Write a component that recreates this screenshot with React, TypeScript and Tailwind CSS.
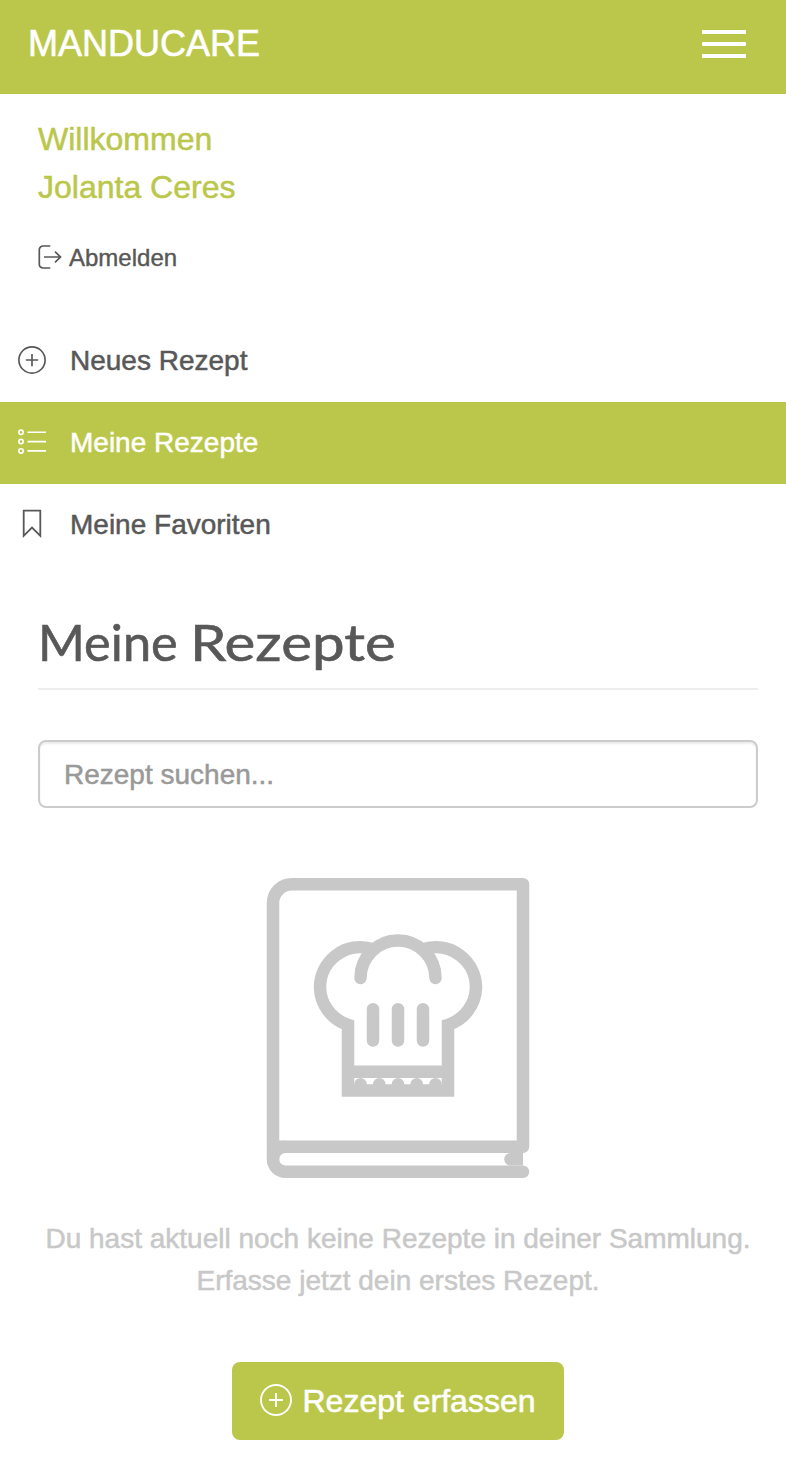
import type { ReactNode } from "react";

function PlusCircle({ className }: { className: string }) {
  return (
    <svg viewBox="0 0 32 32" fill="none" stroke="currentColor" strokeWidth="1.9" className={className}>
      <circle cx="16" cy="16" r="15" />
      <path d="M16 9v14M9 16h14" />
    </svg>
  );
}

function ListIcon() {
  return (
    <svg viewBox="0 0 28 28" fill="none" stroke="currentColor" strokeWidth="1.6" className="h-7 w-7">
      <circle cx="3" cy="4.3" r="2.2" />
      <circle cx="3" cy="13.6" r="2.2" />
      <circle cx="3" cy="22.9" r="2.2" />
      <path d="M9.5 4.3H28M9.5 13.6H28M9.5 22.9H28" />
    </svg>
  );
}

function BookmarkIcon() {
  return (
    <svg viewBox="0 0 28 28" fill="none" stroke="currentColor" strokeWidth="1.8" className="h-7 w-7 overflow-visible">
      <path d="M5.7 .6H22.3V25.8L14 17.6L5.7 25.8Z" />
    </svg>
  );
}

function LogoutIcon() {
  return (
    <svg viewBox="0 0 24 24" fill="none" stroke="currentColor" strokeWidth="1.7" className="h-6 w-6">
      <path d="M12.3 1H4.9A3.6 3.6 0 0 0 1.3 4.6V19.4A3.6 3.6 0 0 0 4.9 23H12.3" />
      <path d="M6 12H22.5M17 6.7L22.5 12L17 17.3" />
    </svg>
  );
}

function CookbookIcon() {
  return (
    <svg viewBox="0 0 24 24" fill="none" stroke="currentColor" strokeWidth="1" className="h-[300px] w-[300px] text-[#c8c8c8]">
      <path strokeLinecap="round" strokeLinejoin="round" d="M2 21.5H22V.5H3.5A1.5 1.5 0 0 0 2 2V22.5A1 1 0 0 0 3 23.5H22" />
      <path fill="currentColor" stroke="none" d="M22 22H21A.5.5 0 0 0 21 23H22Z" />
      <path strokeLinecap="round" d="M9 8A3 3 0 0 1 15 8M10 10.5V13M12 10.5V13M14 10.5V13" />
      <path d="M9.85 5.66A3.22 3.22 0 0 0 5.76 8.75A3.22 3.22 0 0 0 8 11.75V17H16V11.75A3.22 3.22 0 0 0 18.24 8.75A3.22 3.22 0 0 0 14.15 5.66M8 15.5H16" />
      <g fill="currentColor" stroke="none">
        <circle cx="9" cy="16.5" r=".5" />
        <circle cx="10.5" cy="16.5" r=".5" />
        <circle cx="12" cy="16.5" r=".5" />
        <circle cx="13.5" cy="16.5" r=".5" />
        <circle cx="15" cy="16.5" r=".5" />
      </g>
      <path d="M2 22.5A1 1 0 0 1 3 21.5" />
    </svg>
  );
}

function MenuItem({ icon, label, active }: { icon: ReactNode; label: string; active?: boolean }) {
  return (
    <a
      className={
        active
          ? "flex h-[82px] items-center gap-6 bg-[#bbc74a] px-[18px] text-white"
          : "flex h-[82px] items-center gap-6 px-[18px] text-[#585858]"
      }
    >
      <span className="-mt-[3px]">{icon}</span>
      <span className="text-[28px] leading-10 [-webkit-text-stroke:0.5px]">{label}</span>
    </a>
  );
}

export default function App() {
  return (
    <div className="h-[1466px] w-full overflow-hidden bg-white font-['Liberation_Sans',Arial,sans-serif] text-[#585858]">
      <header className="flex h-[94px] items-start justify-between bg-[#bbc74a] pl-7 pr-10 text-white">
        <span className="pt-6 text-4xl leading-10 [-webkit-text-stroke:0.6px]">MANDUCARE</span>
        <button aria-label="Menü" className="flex w-11 flex-col gap-2 pt-[30px]">
          <span className="h-1 rounded-[1px] bg-white" />
          <span className="h-1 rounded-[1px] bg-white" />
          <span className="h-1 rounded-[1px] bg-white" />
        </button>
      </header>

      <section className="h-[226px] px-[38px] pt-[21px]">
        <p className="text-[32px] leading-[48px] text-[#bbc74a] [-webkit-text-stroke:0.5px]">
          Willkommen
          <br />
          Jolanta Ceres
        </p>
        <a className="mt-[29px] flex items-center gap-[7px] text-2xl leading-8">
          <LogoutIcon />
          <span className="pt-0.5 leading-8 [-webkit-text-stroke:0.4px]">Abmelden</span>
        </a>
      </section>

      <nav>
        <MenuItem icon={<PlusCircle className="h-7 w-7" />} label="Neues Rezept" />
        <MenuItem icon={<ListIcon />} label="Meine Rezepte" active />
        <MenuItem icon={<BookmarkIcon />} label="Meine Favoriten" />
      </nav>

      <main className="flex flex-col items-center pl-[38px] pr-7">
        <h1 className="flex h-[124px] w-full border-b-2 border-[#eeeeee] pt-[46px] font-['Lato',sans-serif] text-[50px] leading-[60px] whitespace-nowrap [-webkit-text-stroke:0.6px]">
          <span className="w-[152px] origin-left scale-x-[1.01]">Meine</span>{" "}
          <span className="origin-left scale-x-[1.165]">Rezepte</span>
        </h1>
        <input
          placeholder="Rezept suchen..."
          className="mt-[50px] h-[68px] w-full rounded-lg border-2 border-[#cccccc] px-6 pt-0.5 text-[28px] shadow-[inset_0_2px_2px_rgba(0,0,0,0.075)] placeholder:text-[#999999] placeholder:[-webkit-text-stroke:0.5px]"
        />
        <div className="mt-[70px]">
          <CookbookIcon />
        </div>
        <p className="mt-10 text-center text-[28px] leading-[42px] whitespace-nowrap text-[#c8c8c8] [-webkit-text-stroke:0.5px]">
          Du hast aktuell noch keine Rezepte in deiner Sammlung.
          <br />
          Erfasse jetzt dein erstes Rezept.
        </p>
        <button className="mt-[60px] flex h-[78px] w-[332px] items-center justify-center gap-2.5 rounded-lg bg-[#bbc74a] text-[32px] leading-10 text-white">
          <PlusCircle className="-mt-0.5 h-8 w-8" />
          <span className="[-webkit-text-stroke:0.6px]">Rezept erfassen</span>
        </button>
      </main>
    </div>
  );
}
